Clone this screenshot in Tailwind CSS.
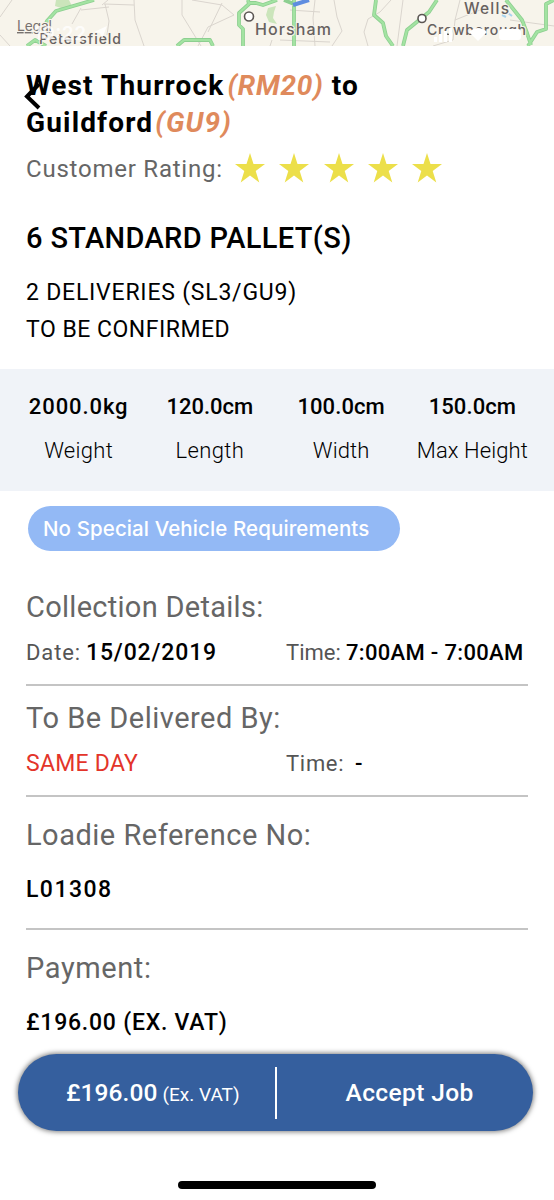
<!DOCTYPE html>
<html lang="en">
<head>
<meta charset="utf-8">
<meta name="viewport" content="width=device-width, initial-scale=1">
<title>Job details</title>
<script src="https://cdn.jsdelivr.net/npm/@tailwindcss/browser@4"></script>
</head>
<body class="bg-white">
<div class="relative flex h-[1200px] w-[554px] flex-col overflow-hidden bg-white font-['Roboto',sans-serif] text-black">

  <!-- Map strip -->
  <svg class="block h-[46px] w-[554px] shrink-0" viewBox="0 0 554 46" fill="none">
    <rect width="554" height="46" fill="#f7f4eb"/>
    <path d="M56 0h13l3 6-8 3-9-3zM268 8l8-2-2 6-1 6 4 6-8-2-3-7z" fill="#cbe5bb"/>
    <g stroke="#dad5ce" stroke-width="1">
      <path d="M12 0L0 17M0 35l10 11M108 0l-6 5M109 7l-28 3M81 8l-9 16M105 4l4 17-2 14M134 0l1 20 9 26M104 4l30 1M182 0v15l19 31M192 0l30 5 12 10-26 12-10 19M222 3l-14 29M272 40l-2 6M315 0l-2 18 2 28M334 0l3 17 5 14-10 15M391 0l-11 12-12 7-4 13 4 14M403 0l-6 46M460 0l-5 20-2 20-20 6M455 20l25-10M510 20l44 6M290 10l30 2M280 40l50 2"/>
    </g>
    <g stroke="#8dcf90" stroke-width="3.800" stroke-linejoin="round">
      <path d="M94 0L56 11l-9 10-5 12M27 46l8-6 11 6M177 46l7-6h26l3 6M248 0l1 4-10 9v12l4 4v17M249 3l7 0 7 2 14-5M294 0v46M284 0l10 4M376 0l-2 15 9 8 3 13 7 10M437 0l-8 12-22 18-4 16M506 0l16 20 5 13 4 12M554 0l-8 4v25l-9 3-9 14"/>
    </g>
    <g stroke="#a3e3a2" stroke-width="2.200" stroke-linejoin="round">
      <path d="M94 0L56 11l-9 10-5 12M27 46l8-6 11 6M177 46l7-6h26l3 6M248 0l1 4-10 9v12l4 4v17M249 3l7 0 7 2 14-5M294 0v46M376 0l-2 15 9 8 3 13 7 10M437 0l-8 12-22 18-4 16M506 0l16 20 5 13 4 12M554 0l-8 4v25l-9 3-9 14"/>
    </g>
    <path d="M293 5l16-5" stroke="#5f8de0" stroke-width="4"/>
    <path d="M502 15l4 2M508 13l4 3" stroke="#a9d4ee" stroke-width="2"/>
    <circle cx="249" cy="16.500" r="4.500" fill="#fff" stroke="#5b5653" stroke-width="1.600"/>
    <circle cx="422" cy="18.500" r="4" fill="#fff" stroke="#5b5653" stroke-width="1.600"/>
    <g font-family="Inter, sans-serif" fill="#67615f" stroke="#f7f4eb" stroke-width="2" paint-order="stroke" font-weight="500">
      <text x="17" y="31" font-size="14" textLength="35" fill="#77726f" text-decoration="underline" font-weight="400">Legal</text>
      <text x="39" y="44" font-size="14" textLength="82">Petersfield</text>
      <text x="255" y="34.500" font-size="16" textLength="76">Horsham</text>
      <text x="464" y="13.500" font-size="15.500" textLength="45">Wells</text>
      <text x="427" y="34.500" font-size="14" textLength="99">Crowborough</text>
    </g>
    <g fill="#fff">
      <text x="34" y="40" font-family="Inter, sans-serif" font-size="19" font-weight="600" textLength="52" fill-opacity=".8">19:22</text>
      <path d="M94 32l13-6-5 13-2-6z" fill-opacity=".8"/>
      <path d="M434 37h3v5h-3zM439 34h3v8h-3zM444 31h3v11h-3zM449 28h3v14h-3z"/>
      <path d="M469 32q9-8 18 0l-9 9z"/>
      <rect x="499" y="29" width="22" height="11" rx="3"/>
    </g>
  </svg>

  <!-- Route and rating -->
  <div class="mt-[21px] px-[26px]">
    <h1 class="text-[28px] leading-[37px] font-bold tracking-[1.150px] whitespace-nowrap">West Thurrock<span class="ml-[3px] tracking-[0.800px] text-[#df8a5c] italic">(RM20)</span> to<br>Guildford<span class="ml-[2px] tracking-[1.100px] text-[#df8a5c] italic">(GU9)</span></h1>
    <div class="mt-[10px] flex h-9 items-center">
      <span class="w-[209px] text-[24px] leading-9 tracking-[0.770px] whitespace-nowrap text-[#666]">Customer Rating:</span>
      <div class="-mt-[2px] flex gap-[14.300px] text-[#ecdf4a]">
        <svg class="h-[30px] w-[30px]" viewBox="0 0 30 30" fill="currentColor"><path d="M15 0l3.500 11H30l-9.300 7 3.600 11.500L15 22.500l-9.300 7L9.300 18 0 11h11.500z"/></svg>
        <svg class="h-[30px] w-[30px]" viewBox="0 0 30 30" fill="currentColor"><path d="M15 0l3.500 11H30l-9.300 7 3.600 11.500L15 22.500l-9.300 7L9.300 18 0 11h11.500z"/></svg>
        <svg class="h-[30px] w-[30px]" viewBox="0 0 30 30" fill="currentColor"><path d="M15 0l3.500 11H30l-9.300 7 3.600 11.500L15 22.500l-9.300 7L9.300 18 0 11h11.500z"/></svg>
        <svg class="h-[30px] w-[30px]" viewBox="0 0 30 30" fill="currentColor"><path d="M15 0l3.500 11H30l-9.300 7 3.600 11.500L15 22.500l-9.300 7L9.300 18 0 11h11.500z"/></svg>
        <svg class="h-[30px] w-[30px]" viewBox="0 0 30 30" fill="currentColor"><path d="M15 0l3.500 11H30l-9.300 7 3.600 11.500L15 22.500l-9.300 7L9.300 18 0 11h11.500z"/></svg>
      </div>
    </div>
    <h2 class="mt-[33px] text-[29px] leading-9 font-medium tracking-[0.350px] whitespace-nowrap">6 STANDARD PALLET(S)</h2>
    <p class="mt-[18px] text-[23px] leading-[37px] tracking-[0.780px] whitespace-nowrap">2 DELIVERIES (SL3/GU9)</p>
    <p class="text-[23px] leading-[37px] tracking-[0.500px] whitespace-nowrap">TO BE CONFIRMED</p>
  </div>

  <!-- Dimensions -->
  <div class="mt-[21px] grid h-[122px] shrink-0 grid-cols-4 bg-[#f0f3f8] pt-[23px] pr-[16px] pl-[13px] text-center text-[22px] leading-[30px] whitespace-nowrap">
    <div><div class="font-medium tracking-[0.900px]">2000.0kg</div><div class="mt-[14px] font-light tracking-[0.300px]">Weight</div></div>
    <div><div class="font-medium">120.0cm</div><div class="mt-[14px] font-light tracking-[0.400px]">Length</div></div>
    <div><div class="font-medium tracking-[0.100px]">100.0cm</div><div class="mt-[14px] font-light tracking-[0.100px]">Width</div></div>
    <div><div class="font-medium tracking-[0.100px]">150.0cm</div><div class="mt-[14px] font-light tracking-[0.100px]">Max Height</div></div>
  </div>

  <div class="mt-[15px] ml-7 flex h-[45px] w-[372px] shrink-0 items-center rounded-full bg-[#93b9f5] pt-[2px] pl-[15px] font-['Inter',sans-serif] text-[20.500px] font-medium tracking-[0.100px] whitespace-nowrap text-white">No Special Vehicle Requirements</div>

  <!-- Details -->
  <div class="mt-[38px] px-[26px] text-[22px] leading-[30px] whitespace-nowrap">
    <section class="h-[97px] border-b-2 border-[#c4c4c4]">
      <h3 class="text-[29px] leading-9 tracking-[0.280px] text-[#666]">Collection Details:</h3>
      <div class="mt-[13px] flex">
        <div class="flex w-[260px]"><span class="w-[60px] tracking-[0.900px] text-[#555]">Date:</span><span class="text-[23px] font-medium tracking-[0.850px]">15/02/2019</span></div>
        <div class="flex"><span class="w-[60px] text-[#555]">Time:</span><span class="font-medium tracking-[0.320px]">7:00AM - 7:00AM</span></div>
      </div>
    </section>
    <section class="h-[111px] border-b-2 border-[#c4c4c4] pt-[14px]">
      <h3 class="text-[29px] leading-9 tracking-[0.500px] text-[#666]">To Be Delivered By:</h3>
      <div class="mt-[13px] flex">
        <div class="w-[260px] text-[23px] tracking-[0.250px] text-[#e3342a]">SAME DAY</div>
        <div class="flex"><span class="w-[69px] tracking-[0.700px] text-[#555]">Time:</span><span class="font-medium">-</span></div>
      </div>
    </section>
    <section class="h-[133px] border-b-2 border-[#c4c4c4] pt-5">
      <h3 class="text-[29px] leading-9 tracking-[0.500px] text-[#666]">Loadie Reference No:</h3>
      <p class="mt-[22px] text-[23px] font-medium tracking-[1.450px]">L01308</p>
    </section>
    <section class="h-[124px] pt-5">
      <h3 class="text-[29px] leading-9 tracking-[0.600px] text-[#666]">Payment:</h3>
      <p class="mt-[22px] text-[23px] font-medium tracking-[0.770px]">£196.00 (EX. VAT)</p>
    </section>
  </div>

  <!-- Action bar -->
  <div class="ml-[18px] flex h-[77px] w-[515px] shrink-0 items-center rounded-full bg-[#355f9e] text-[24.500px] font-medium whitespace-nowrap text-white shadow-[0_0_5px_1px_rgba(0,0,0,0.5)]">
    <div class="flex w-[257px] items-baseline pt-px pl-12"><span class="tracking-[0.100px]">£196.00</span><span class="ml-[5px] text-[19px] font-normal">(Ex. VAT)</span></div>
    <div class="h-[52px] w-[1.500px] bg-white"></div>
    <div class="flex-1 pt-px pl-[69px] tracking-[0.400px]">Accept Job</div>
  </div>

  <div class="mx-auto mt-[49.500px] h-[8px] w-[198px] shrink-0 rounded-full bg-black"></div>

  <!-- Back button floats over the title -->
  <svg class="absolute top-[80px] left-[21px] h-8 w-6" viewBox="0 0 24 32" fill="none" stroke="#000" stroke-width="4"><path d="M18 4L6 16.500 18 28"/></svg>
</div>
</body>
</html>
